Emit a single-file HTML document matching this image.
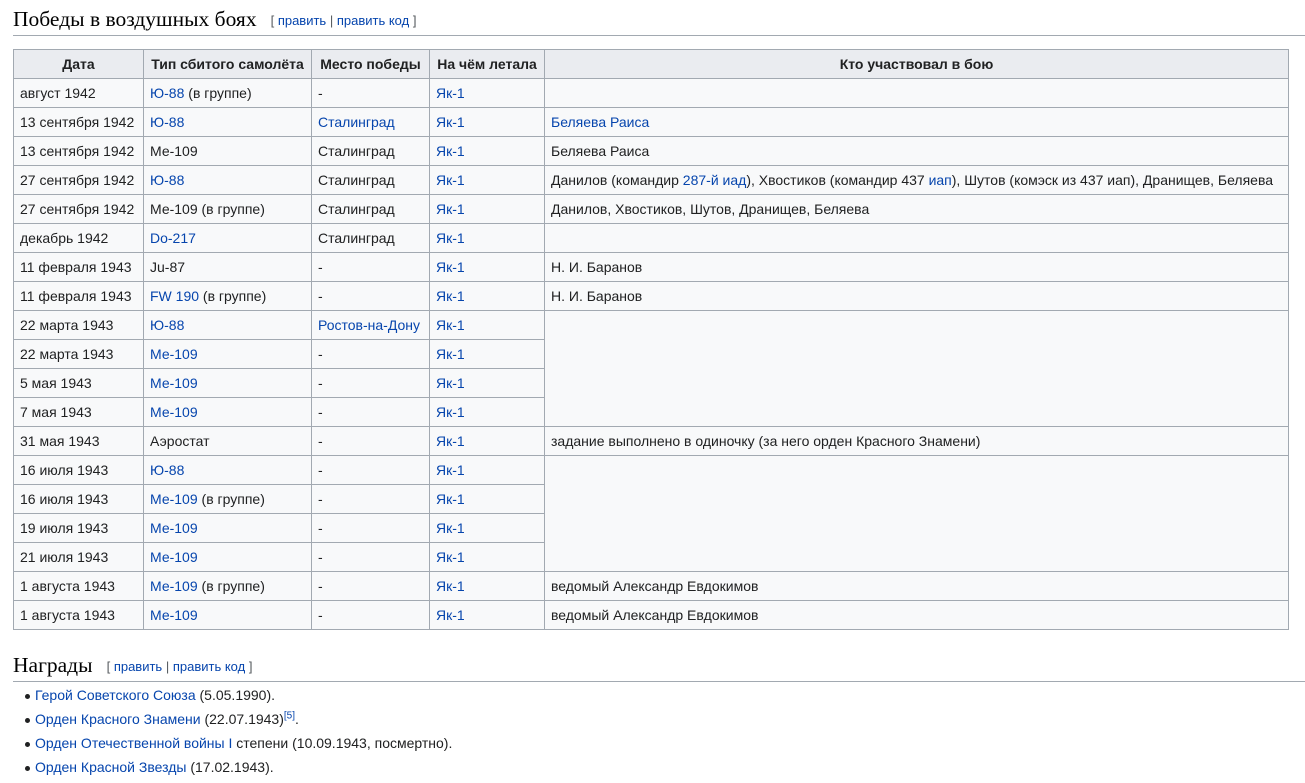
<!DOCTYPE html>
<html><head><meta charset="utf-8"><style>
body{margin:0;background:#fff;font-family:"Liberation Sans",sans-serif;font-size:14px;color:#202122;width:1305px;height:783px;overflow:hidden;position:relative}
a{color:#0645ad;text-decoration:none}
h2{position:absolute;left:13px;margin:0;font-family:"Liberation Serif",serif;font-weight:normal;font-size:21.5px;color:#000;border-bottom:1px solid #a2a9b1;right:0;line-height:28px;padding-bottom:0}
h2 .e{font-family:"Liberation Sans",sans-serif;font-size:13px;color:#54595d;margin-left:14px;vertical-align:1px}
table{position:absolute;left:13px;top:49px;border-collapse:collapse;background:#f8f9fa;table-layout:fixed;width:1276px}
td,th{border:1px solid #a2a9b1;padding:0 6px;height:28px;white-space:nowrap;text-align:left}
th{background:#eaecf0;text-align:center;font-weight:bold}
ul{position:absolute;left:35px;top:683px;margin:0;padding:0;list-style:none}
li{line-height:24px;position:relative}
li:before{content:"";position:absolute;left:-10px;top:11px;width:5px;height:5px;border-radius:50%;background:#202122}
sup{font-size:10px;line-height:0}
</style></head><body>
<h2 style="top:5px">Победы в воздушных боях<span class="e">[ <a>править</a> | <a>править код</a> ]</span></h2>
<table>
<colgroup><col style="width:130px"><col style="width:168px"><col style="width:118px"><col style="width:115px"><col></colgroup>
<tr><th>Дата</th><th>Тип сбитого самолёта</th><th>Место победы</th><th>На чём летала</th><th>Кто участвовал в бою</th></tr>
<tr><td>август 1942</td><td><a>Ю-88</a> (в группе)</td><td>-</td><td><a>Як-1</a></td><td></td></tr>
<tr><td>13 сентября 1942</td><td><a>Ю-88</a></td><td><a>Сталинград</a></td><td><a>Як-1</a></td><td><a>Беляева Раиса</a></td></tr>
<tr><td>13 сентября 1942</td><td>Ме-109</td><td>Сталинград</td><td><a>Як-1</a></td><td>Беляева Раиса</td></tr>
<tr><td>27 сентября 1942</td><td><a>Ю-88</a></td><td>Сталинград</td><td><a>Як-1</a></td><td>Данилов (командир <a>287-й иад</a>), Хвостиков (командир 437 <a>иап</a>), Шутов (комэск из 437 иап), Дранищев, Беляева</td></tr>
<tr><td>27 сентября 1942</td><td>Ме-109 (в группе)</td><td>Сталинград</td><td><a>Як-1</a></td><td>Данилов, Хвостиков, Шутов, Дранищев, Беляева</td></tr>
<tr><td>декабрь 1942</td><td><a>Do-217</a></td><td>Сталинград</td><td><a>Як-1</a></td><td></td></tr>
<tr><td>11 февраля 1943</td><td>Ju-87</td><td>-</td><td><a>Як-1</a></td><td>Н. И. Баранов</td></tr>
<tr><td>11 февраля 1943</td><td><a>FW 190</a> (в группе)</td><td>-</td><td><a>Як-1</a></td><td>Н. И. Баранов</td></tr>
<tr><td>22 марта 1943</td><td><a>Ю-88</a></td><td><a>Ростов-на-Дону</a></td><td><a>Як-1</a></td><td rowspan="4"></td></tr>
<tr><td>22 марта 1943</td><td><a>Ме-109</a></td><td>-</td><td><a>Як-1</a></td></tr>
<tr><td>5 мая 1943</td><td><a>Ме-109</a></td><td>-</td><td><a>Як-1</a></td></tr>
<tr><td>7 мая 1943</td><td><a>Ме-109</a></td><td>-</td><td><a>Як-1</a></td></tr>
<tr><td>31 мая 1943</td><td>Аэростат</td><td>-</td><td><a>Як-1</a></td><td>задание выполнено в одиночку (за него орден Красного Знамени)</td></tr>
<tr><td>16 июля 1943</td><td><a>Ю-88</a></td><td>-</td><td><a>Як-1</a></td><td rowspan="4"></td></tr>
<tr><td>16 июля 1943</td><td><a>Ме-109</a> (в группе)</td><td>-</td><td><a>Як-1</a></td></tr>
<tr><td>19 июля 1943</td><td><a>Ме-109</a></td><td>-</td><td><a>Як-1</a></td></tr>
<tr><td>21 июля 1943</td><td><a>Ме-109</a></td><td>-</td><td><a>Як-1</a></td></tr>
<tr><td>1 августа 1943</td><td><a>Ме-109</a> (в группе)</td><td>-</td><td><a>Як-1</a></td><td>ведомый Александр Евдокимов</td></tr>
<tr><td>1 августа 1943</td><td><a>Ме-109</a></td><td>-</td><td><a>Як-1</a></td><td>ведомый Александр Евдокимов</td></tr>
</table>
<h2 style="top:651px">Награды<span class="e">[ <a>править</a> | <a>править код</a> ]</span></h2>
<ul>
<li><a>Герой Советского Союза</a> (5.05.1990).</li>
<li><a>Орден Красного Знамени</a> (22.07.1943)<sup><a>[5]</a></sup>.</li>
<li><a>Орден Отечественной войны I</a> степени (10.09.1943, посмертно).</li>
<li><a>Орден Красной Звезды</a> (17.02.1943).</li>
</ul>
</body></html>
